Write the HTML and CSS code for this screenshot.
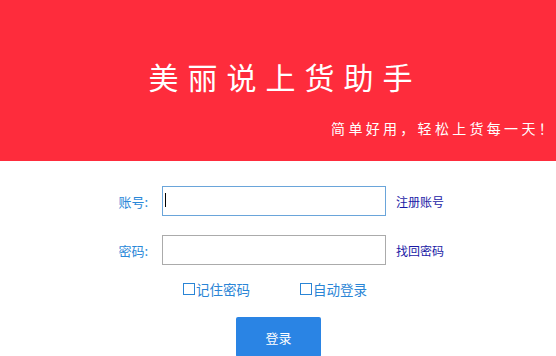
FILE: index.html
```html
<!DOCTYPE html>
<html lang="zh-CN">
<head>
<meta charset="utf-8">
<title>美丽说上货助手</title>
<link rel="stylesheet" href="styles.css">
</head>
<body>
<header class="hero">
  <h1 class="hero-title">美丽说上货助手</h1>
  <p class="hero-slogan">简单好用，轻松上货每一天！</p>
</header>
<main class="login">
  <div class="row">
    <label class="row-label" for="account">账号:</label>
    <span class="field field-focus">
      <input id="account" class="field-input" type="text">
      <span class="caret"></span>
    </span>
    <a class="row-link" href="#">注册账号</a>
  </div>
  <div class="row row-second">
    <label class="row-label" for="password">密码:</label>
    <span class="field">
      <input id="password" class="field-input" type="password">
    </span>
    <a class="row-link" href="#">找回密码</a>
  </div>
  <div class="options">
    <label class="option"><span class="box"></span>记住密码</label>
    <label class="option"><span class="box"></span>自动登录</label>
  </div>
  <div class="actions">
    <button class="submit" type="button">登录</button>
  </div>
</main>
</body>
</html>
```
FILE: styles.css
```css
html, body {
  margin: 0;
  padding: 0;
  background: #ffffff;
  overflow: hidden;
}
body {
  font-family: "Noto Sans CJK SC", "Noto Sans", sans-serif;
  width: 556px;
  height: 356px;
}
.hero {
  background: #fe2c3c;
  height: 161px;
  box-sizing: border-box;
  padding-top: 61px;
  color: #ffffff;
}
.hero-title {
  margin: 0;
  padding-left: 14px;
  font-size: 30px;
  line-height: 30px;
  font-weight: 400;
  letter-spacing: 9px;
  text-align: center;
}
.hero-slogan {
  margin: 29px 0 0;
  font-size: 14px;
  line-height: 16px;
  letter-spacing: 3.3px;
  text-align: right;
  white-space: nowrap;
}
.login {
  padding-top: 25px;
}
.row {
  display: flex;
  align-items: center;
  height: 30px;
}
.row-second {
  margin-top: 19px;
}
.row-label {
  width: 148px;
  text-align: right;
  font-size: 13px;
  color: #2a88d8;
}
.field {
  position: relative;
  display: block;
  margin-left: 14px;
  width: 224px;
  height: 30px;
}
.field-input {
  display: block;
  box-sizing: border-box;
  width: 224px;
  height: 30px;
  margin: 0;
  padding: 0 4px;
  border: 1px solid #ababab;
  outline: none;
  background: #ffffff;
  font-size: 13px;
}
.field-focus .field-input {
  border-color: #6aa5da;
}
.caret {
  position: absolute;
  left: 3px;
  top: 7px;
  width: 1px;
  height: 14px;
  background: #000000;
}
.row-link {
  margin-left: 10px;
  font-size: 12px;
  color: #1a1aa6;
  text-decoration: none;
}
.options {
  display: flex;
  gap: 50px;
  padding-left: 183px;
  margin-top: 16px;
  height: 16px;
  align-items: center;
}
.option {
  display: flex;
  align-items: center;
  font-size: 13.5px;
  color: #2a85d6;
  line-height: 16px;
}
.box {
  display: inline-block;
  box-sizing: border-box;
  width: 12px;
  height: 12px;
  border: 1.5px solid #2a85d6;
  margin-right: 1px;
}
.actions {
  display: flex;
  justify-content: center;
  margin-top: 20px;
  padding-left: 1px;
}
.submit {
  width: 85px;
  height: 40px;
  border: none;
  border-radius: 2px;
  background: #2a84e4;
  color: #ffffff;
  font-family: inherit;
  font-size: 13px;
  padding: 0;
}
```
